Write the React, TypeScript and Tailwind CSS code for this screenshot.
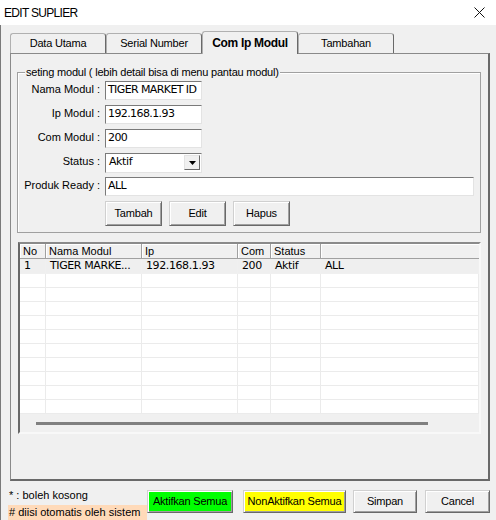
import React from 'react';

const ui = { fontFamily: '"Liberation Sans", Arial, sans-serif' };
const tah = { fontFamily: '"DejaVu Sans", "Noto Sans", sans-serif' };

function Field({ label, value, wide }: { label: string; value: string; wide?: boolean }) {
  return (
    <div className="flex h-[19px] items-center">
      <div className="w-[83px] shrink-0 whitespace-nowrap pb-[3px] pr-[1px] text-right text-[11px] leading-none text-black">
        {label}
      </div>
      <div
        className={`ml-[4px] flex h-[19px] items-center border border-[#e3e3e3] border-t-[#7a7a7a] border-l-[#7a7a7a] bg-white pl-[2px] text-[11px] tracking-[-0.6px] text-black ${
          wide ? 'w-[369px]' : 'w-[97px]'
        }`}
        style={tah}
      >
        {value}
      </div>
    </div>
  );
}

function Btn({ children, className = '' }: { children: React.ReactNode; className?: string }) {
  return (
    <button
      className={`flex items-center justify-center whitespace-nowrap border border-[#d0d0d0] border-r-[#696969] border-b-[#696969] text-[11px] tracking-[-0.2px] text-black shadow-[inset_1px_1px_0_#ffffff,inset_-1px_-1px_0_#a0a0a0] ${className}`}
      style={ui}
    >
      {children}
    </button>
  );
}

export default function App() {
  const cols = ['No', 'Nama Modul', 'Ip', 'Com', 'Status', ''];
  const row = ['1', 'TIGER MARKE...', '192.168.1.93', '200', 'Aktif', 'ALL'];
  const empty = Array.from({ length: 10 });

  return (
    <div className="flex h-[520px] w-[496px] flex-col overflow-hidden bg-[#f0f0f0] text-[11px]" style={ui}>
      {/* title bar */}
      <div className="flex h-[25px] shrink-0 items-center justify-between bg-white pl-[4px] pr-[10px]">
        <span className="text-[12px] tracking-[-0.7px] text-black">EDIT SUPLIER</span>
        <svg width="11" height="11" viewBox="0 0 11 11" className="mr-[1px]">
          <path d="M0.5 0.5 L10.5 10.5 M10.5 0.5 L0.5 10.5" stroke="#111" strokeWidth="1" />
        </svg>
      </div>

      <div className="flex flex-1 flex-col border-l border-[#7a7a7a] pl-[9px]">
        {/* tabs */}
        <div className="mt-[6px] flex h-[22px] items-end">
          {['Data Utama', 'Serial Number', 'Com Ip Modul', 'Tambahan'].map((t, i) =>
            i === 2 ? (
              <div
                key={t}
                className="relative z-10 -mb-[1px] flex h-[23px] w-[96px] items-center justify-center whitespace-nowrap rounded-tl-[3px] rounded-tr-[3px] border border-b-0 border-[#b0b0b0] border-r-[#696969] bg-[#f0f0f0] pb-[1px] text-[12px] font-bold tracking-[-0.3px] text-black"
              >
                {t}
              </div>
            ) : (
              <div
                key={t}
                className="flex h-[20px] w-[96px] items-center justify-center whitespace-nowrap rounded-tl-[3px] rounded-tr-[3px] border border-b-0 border-[#b0b0b0] border-r-[#696969] bg-[#f0f0f0] text-[11px] tracking-[-0.2px] text-black"
              >
                {t}
              </div>
            )
          )}
        </div>

        {/* panel */}
        <div className="flex h-[428px] w-[480px] flex-col border border-[#8a8a8a] border-r-2 border-b-2 border-r-[#696969] border-b-[#696969]">
          {/* group box */}
          <div className="relative ml-[6px] mt-[18px] h-[161px] w-[464px] border border-[#a0a0a0] shadow-[inset_1px_1px_0_#ffffff]">
            <span className="absolute -top-[8px] left-[7px] whitespace-nowrap bg-[#f0f0f0] px-[1px] text-[11px] leading-[15px] tracking-[-0.2px] text-black">
              seting modul ( lebih detail bisa di menu pantau modul)
            </span>
            <div className="flex flex-col gap-[5px] pt-[8px]">
              <Field label="Nama Modul :" value="TIGER MARKET ID" />
              <Field label="Ip Modul :" value="192.168.1.93" />
              <Field label="Com Modul :" value="200" />
              <div className="flex h-[19px] items-center">
                <div className="w-[83px] shrink-0 pb-[3px] pr-[1px] text-right text-[11px] leading-none text-black">Status :</div>
                <div
                  className="ml-[4px] flex h-[20px] w-[97px] items-center justify-between border border-[#e3e3e3] border-t-[#7a7a7a] border-l-[#7a7a7a] bg-white pl-[3px] pr-[1px] text-[11px] tracking-[-0.4px] text-black"
                  style={tah}
                >
                  <span>Aktif</span>
                  <span className="flex h-[15px] w-[16px] items-center justify-center border border-[#e3e3e3] border-r-[#696969] border-b-[#696969] bg-[#f0f0f0]">
                    <svg width="7" height="4" viewBox="0 0 7 4">
                      <path d="M0 0 H7 L3.5 4 Z" fill="#000" />
                    </svg>
                  </span>
                </div>
              </div>
              <Field label="Produk Ready :" value="ALL" wide />
              <div className="ml-[87px] flex gap-[7px]">
                <Btn className="h-[25px] w-[57px]">Tambah</Btn>
                <Btn className="h-[25px] w-[57px]">Edit</Btn>
                <Btn className="h-[25px] w-[57px]">Hapus</Btn>
              </div>
            </div>
          </div>

          {/* table */}
          <div className="ml-[7px] mt-[9px] flex h-[192px] w-[463px] flex-col border-2 border-[#a0a0a0] border-t-[#8a8a8a] border-l-[#696969] border-r-[#f8f8f8] border-b-[#f8f8f8] bg-white">
            <div className="grid grid-cols-[26px_96px_96px_33px_50px_1fr]">
              {cols.map((c, i) => (
                <div
                  key={i}
                  className={`flex h-[15px] items-center whitespace-nowrap border-b border-r border-[#a0a0a0] bg-[#f0f0f0] pl-[3px] text-[11px] text-black shadow-[inset_1px_1px_0_#ffffff] ${
                    i === 5 ? 'border-r-0' : ''
                  }`}
                >
                  {c}
                </div>
              ))}
              {row.map((c, i) => (
                <div
                  key={`r${i}`}
                  className="flex h-[15px] items-center whitespace-nowrap border-b border-r border-[#f0f0f0] bg-[#efefef] pl-[4px] text-[11px] tracking-[-0.4px] text-black"
                  style={tah}
                >
                  {c}
                </div>
              ))}
              {empty.map((_, r) =>
                cols.map((_c, i) => (
                  <div key={`e${r}-${i}`} className="h-[14px] border-b border-r border-[#ebebeb] bg-white" />
                ))
              )}
            </div>
            <div className="flex flex-1 items-center bg-[#f0f0f0]">
              <div className="ml-[16px] h-[3px] w-[392px] bg-[#808080]" />
            </div>
          </div>
        </div>

        {/* footer */}
        <div className="flex items-start">
          <div className="-ml-[2px] flex w-[139px] flex-col">
            <div className="mt-[6px] h-[17px] whitespace-nowrap pl-[1px] text-[11px] leading-[17px] text-black">* : boleh kosong</div>
            <div className="mt-[1px] h-[16px] whitespace-nowrap bg-[#ffdab9] pl-[1px] text-[11px] leading-[15px] text-black">
              # diisi otomatis oleh sistem
            </div>
          </div>
          <Btn className="mt-[9px] h-[23px] w-[86px] bg-[#00ff00]">Aktifkan Semua</Btn>
          <Btn className="ml-[10px] mt-[9px] h-[23px] w-[103px] bg-[#ffff00]">NonAktifkan Semua</Btn>
          <Btn className="ml-[7px] mt-[9px] h-[23px] w-[64px] bg-[#f0f0f0]">Simpan</Btn>
          <Btn className="ml-[8px] mt-[9px] h-[23px] w-[65px] bg-[#f0f0f0]">Cancel</Btn>
        </div>
      </div>
    </div>
  );
}
